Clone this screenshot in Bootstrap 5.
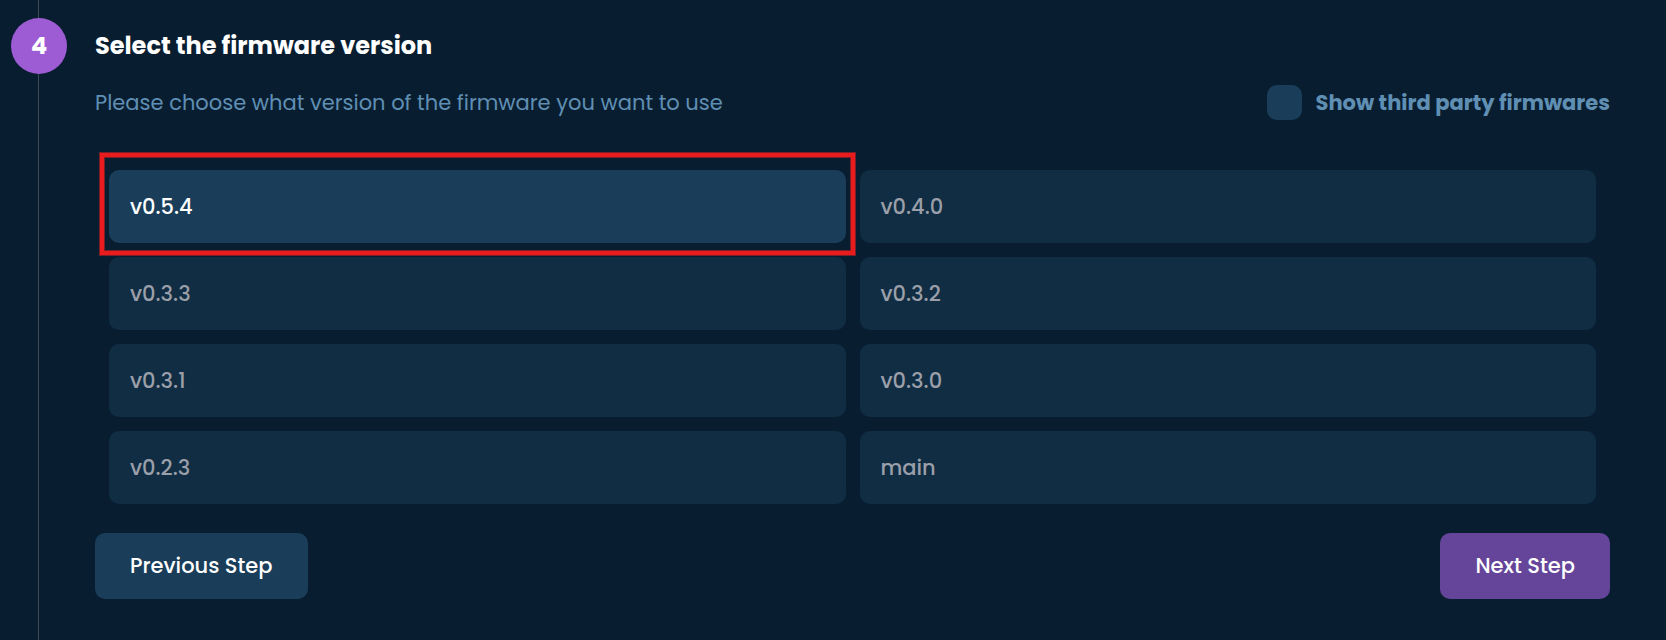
<!DOCTYPE html>
<html lang="en">
<head>
<meta charset="utf-8">
<meta name="viewport" content="width=device-width, initial-scale=1">
<title>Firmware version</title>
<link href="https://cdn.jsdelivr.net/npm/bootstrap@5.3.0/dist/css/bootstrap.min.css" rel="stylesheet">
<style>
  body { background: #081e30; color: #fff; font-family: Poppins, Inter, sans-serif; font-size: 21px; line-height: 31px; }
  .step { padding: 18px 56px 24px 11px; gap: 28px; }
  .step-rail { width: 56px; }
  /* vertical line that joins the steps, behind the number */
  .step-rail::before { content: ""; position: absolute; top: -18px; bottom: -40px; left: 27px; width: 1px; background: #3c4a58; }
  .step-number { width: 56px; height: 56px; background: #9d5cd4; font-size: 24px; line-height: 32px; }
  .step-title { font-size: 24px; line-height: 56px; }
  .soft-text { color: #608fb4; }
  .third-party { gap: 14px; }
  .third-party .form-check-input { width: 35px; height: 35px; border: 0; border-radius: 10px; background-color: #1a3d59; }
  .third-party .form-check-input:checked { background-color: #9d5cd4; }
  .options-row { margin-top: 11px; min-height: 35px; }
  .versions { display: grid; grid-template-columns: 1fr 1fr; gap: 14px; margin: 50px 14px 29px; }
  .version { display: block; height: 100%; padding: 21px; border-radius: 10px; background: #112d43; color: #9a9fa9; font-weight: 500; cursor: pointer; }
  .btn-check:checked + .version { background: #1a3d59; color: #fff; }
  .callout-frame { position: absolute; inset: -17px -9px -12px -9px; border: 4px solid #e81c1c; box-shadow: 0 0 0 1px #7c1d27, inset 0 0 0 1px #7c1d27; pointer-events: none; }
  .step-btn { padding: 17px 35px; border: 0; border-radius: 10px; font-size: 21px; line-height: 32px; font-weight: 500; color: #fff; }
  .step-btn:hover { color: #fff; }
  .step-btn-prev, .step-btn-prev:hover { background: #1a3d59; }
  .step-btn-next, .step-btn-next:hover { background: #65459a; }
</style>
</head>
<body>
<main class="step d-flex min-vh-100 overflow-hidden">
  <div class="step-rail position-relative flex-shrink-0">
    <div class="step-number position-relative rounded-circle d-flex align-items-center justify-content-center fw-bold">4</div>
  </div>
  <section class="flex-grow-1">
    <h1 class="step-title fw-bold m-0">Select the firmware version</h1>
    <div class="options-row d-flex flex-wrap align-items-center justify-content-between">
      <p class="soft-text m-0">Please choose what version of the firmware you want to use</p>
      <div class="third-party d-flex align-items-center">
        <input class="form-check-input m-0" type="checkbox" id="third-party">
        <label class="soft-text fw-bold" for="third-party">Show third party firmwares</label>
      </div>
    </div>
    <div class="versions" role="radiogroup" aria-label="Firmware version">
      <div class="position-relative"><input class="btn-check" type="radio" name="version" id="v054" checked><label class="version" for="v054">v0.5.4</label><span class="callout-frame"></span></div>
      <div><input class="btn-check" type="radio" name="version" id="v040"><label class="version" for="v040">v0.4.0</label></div>
      <div><input class="btn-check" type="radio" name="version" id="v033"><label class="version" for="v033">v0.3.3</label></div>
      <div><input class="btn-check" type="radio" name="version" id="v032"><label class="version" for="v032">v0.3.2</label></div>
      <div><input class="btn-check" type="radio" name="version" id="v031"><label class="version" for="v031">v0.3.1</label></div>
      <div><input class="btn-check" type="radio" name="version" id="v030"><label class="version" for="v030">v0.3.0</label></div>
      <div><input class="btn-check" type="radio" name="version" id="v023"><label class="version" for="v023">v0.2.3</label></div>
      <div><input class="btn-check" type="radio" name="version" id="vmain"><label class="version" for="vmain">main</label></div>
    </div>
    <div class="d-flex justify-content-between">
      <button type="button" class="btn step-btn step-btn-prev">Previous Step</button>
      <button type="button" class="btn step-btn step-btn-next">Next Step</button>
    </div>
  </section>
</main>
<script src="https://cdn.jsdelivr.net/npm/bootstrap@5.3.0/dist/js/bootstrap.bundle.min.js"></script>
</body>
</html>
